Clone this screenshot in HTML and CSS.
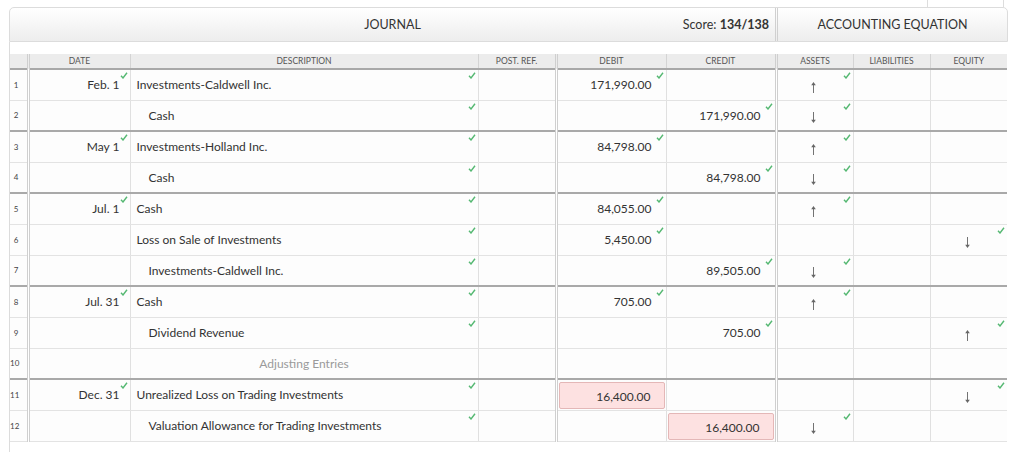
FILE: index.html
```html
<!DOCTYPE html>
<html>
<head>
<meta charset="utf-8">
<link rel="stylesheet" href="styles.css">
</head>
<body>
<div class="topbar"><div class="stub"></div></div>
<div class="panel">
  <div class="tabs">
    <div class="tab-journal">
      <span></span>
      <span class="title">JOURNAL</span>
      <span class="score">Score: <b>134/138</b></span>
    </div>
    <div class="tab-eq">ACCOUNTING EQUATION</div>
  </div>
  <div class="body">
    <table class="journal">
      <colgroup>
        <col class="c-num"><col class="c-date"><col class="c-desc"><col class="c-post"><col class="c-amt"><col class="c-amt"><col class="c-eq"><col class="c-eq"><col class="c-eq">
      </colgroup>
      <thead>
        <tr><th class="num"></th><th class="dbl">DATE</th><th>DESCRIPTION</th><th>POST. REF.</th><th class="dbl">DEBIT</th><th>CREDIT</th><th class="dbl">ASSETS</th><th>LIABILITIES</th><th>EQUITY</th></tr>
      </thead>
      <tbody>
        <tr>
          <td class="num">1</td>
          <td class="date dbl">Feb. 1<svg class="chk" viewBox="0 0 8 7"><path d="M1 3.8L3 6L7 0.8"/></svg></td>
          <td class="desc">Investments-Caldwell Inc.<svg class="chk" viewBox="0 0 8 7"><path d="M1 3.8L3 6L7 0.8"/></svg></td>
          <td></td>
          <td class="amt dbl">171,990.00<svg class="chk" viewBox="0 0 8 7"><path d="M1 3.8L3 6L7 0.8"/></svg></td>
          <td class="amt"></td>
          <td class="eq dbl"><svg class="arr" viewBox="0 0 7 12"><path class="shaft" d="M3.5 2.5V12"/><path class="head" d="M3.5 0L6 3.5H1Z"/></svg><svg class="chk" viewBox="0 0 8 7"><path d="M1 3.8L3 6L7 0.8"/></svg></td>
          <td class="eq"></td>
          <td class="eq"></td>
        </tr>
        <tr class="sep">
          <td class="num">2</td>
          <td class="date dbl"></td>
          <td class="desc ind">Cash<svg class="chk" viewBox="0 0 8 7"><path d="M1 3.8L3 6L7 0.8"/></svg></td>
          <td></td>
          <td class="amt dbl"></td>
          <td class="amt">171,990.00<svg class="chk" viewBox="0 0 8 7"><path d="M1 3.8L3 6L7 0.8"/></svg></td>
          <td class="eq dbl"><svg class="arr down" viewBox="0 0 7 12"><path class="shaft" d="M3.5 0V9.5"/><path class="head" d="M3.5 12L6 8.5H1Z"/></svg><svg class="chk" viewBox="0 0 8 7"><path d="M1 3.8L3 6L7 0.8"/></svg></td>
          <td class="eq"></td>
          <td class="eq"></td>
        </tr>
        <tr>
          <td class="num">3</td>
          <td class="date dbl">May 1<svg class="chk" viewBox="0 0 8 7"><path d="M1 3.8L3 6L7 0.8"/></svg></td>
          <td class="desc">Investments-Holland Inc.<svg class="chk" viewBox="0 0 8 7"><path d="M1 3.8L3 6L7 0.8"/></svg></td>
          <td></td>
          <td class="amt dbl">84,798.00<svg class="chk" viewBox="0 0 8 7"><path d="M1 3.8L3 6L7 0.8"/></svg></td>
          <td class="amt"></td>
          <td class="eq dbl"><svg class="arr" viewBox="0 0 7 12"><path class="shaft" d="M3.5 2.5V12"/><path class="head" d="M3.5 0L6 3.5H1Z"/></svg><svg class="chk" viewBox="0 0 8 7"><path d="M1 3.8L3 6L7 0.8"/></svg></td>
          <td class="eq"></td>
          <td class="eq"></td>
        </tr>
        <tr class="sep">
          <td class="num">4</td>
          <td class="date dbl"></td>
          <td class="desc ind">Cash<svg class="chk" viewBox="0 0 8 7"><path d="M1 3.8L3 6L7 0.8"/></svg></td>
          <td></td>
          <td class="amt dbl"></td>
          <td class="amt">84,798.00<svg class="chk" viewBox="0 0 8 7"><path d="M1 3.8L3 6L7 0.8"/></svg></td>
          <td class="eq dbl"><svg class="arr down" viewBox="0 0 7 12"><path class="shaft" d="M3.5 0V9.5"/><path class="head" d="M3.5 12L6 8.5H1Z"/></svg><svg class="chk" viewBox="0 0 8 7"><path d="M1 3.8L3 6L7 0.8"/></svg></td>
          <td class="eq"></td>
          <td class="eq"></td>
        </tr>
        <tr>
          <td class="num">5</td>
          <td class="date dbl">Jul. 1<svg class="chk" viewBox="0 0 8 7"><path d="M1 3.8L3 6L7 0.8"/></svg></td>
          <td class="desc">Cash<svg class="chk" viewBox="0 0 8 7"><path d="M1 3.8L3 6L7 0.8"/></svg></td>
          <td></td>
          <td class="amt dbl">84,055.00<svg class="chk" viewBox="0 0 8 7"><path d="M1 3.8L3 6L7 0.8"/></svg></td>
          <td class="amt"></td>
          <td class="eq dbl"><svg class="arr" viewBox="0 0 7 12"><path class="shaft" d="M3.5 2.5V12"/><path class="head" d="M3.5 0L6 3.5H1Z"/></svg><svg class="chk" viewBox="0 0 8 7"><path d="M1 3.8L3 6L7 0.8"/></svg></td>
          <td class="eq"></td>
          <td class="eq"></td>
        </tr>
        <tr>
          <td class="num">6</td>
          <td class="date dbl"></td>
          <td class="desc">Loss on Sale of Investments<svg class="chk" viewBox="0 0 8 7"><path d="M1 3.8L3 6L7 0.8"/></svg></td>
          <td></td>
          <td class="amt dbl">5,450.00<svg class="chk" viewBox="0 0 8 7"><path d="M1 3.8L3 6L7 0.8"/></svg></td>
          <td class="amt"></td>
          <td class="eq dbl"></td>
          <td class="eq"></td>
          <td class="eq"><svg class="arr down" viewBox="0 0 7 12"><path class="shaft" d="M3.5 0V9.5"/><path class="head" d="M3.5 12L6 8.5H1Z"/></svg><svg class="chk" viewBox="0 0 8 7"><path d="M1 3.8L3 6L7 0.8"/></svg></td>
        </tr>
        <tr class="sep">
          <td class="num">7</td>
          <td class="date dbl"></td>
          <td class="desc ind">Investments-Caldwell Inc.<svg class="chk" viewBox="0 0 8 7"><path d="M1 3.8L3 6L7 0.8"/></svg></td>
          <td></td>
          <td class="amt dbl"></td>
          <td class="amt">89,505.00<svg class="chk" viewBox="0 0 8 7"><path d="M1 3.8L3 6L7 0.8"/></svg></td>
          <td class="eq dbl"><svg class="arr down" viewBox="0 0 7 12"><path class="shaft" d="M3.5 0V9.5"/><path class="head" d="M3.5 12L6 8.5H1Z"/></svg><svg class="chk" viewBox="0 0 8 7"><path d="M1 3.8L3 6L7 0.8"/></svg></td>
          <td class="eq"></td>
          <td class="eq"></td>
        </tr>
        <tr>
          <td class="num">8</td>
          <td class="date dbl">Jul. 31<svg class="chk" viewBox="0 0 8 7"><path d="M1 3.8L3 6L7 0.8"/></svg></td>
          <td class="desc">Cash<svg class="chk" viewBox="0 0 8 7"><path d="M1 3.8L3 6L7 0.8"/></svg></td>
          <td></td>
          <td class="amt dbl">705.00<svg class="chk" viewBox="0 0 8 7"><path d="M1 3.8L3 6L7 0.8"/></svg></td>
          <td class="amt"></td>
          <td class="eq dbl"><svg class="arr" viewBox="0 0 7 12"><path class="shaft" d="M3.5 2.5V12"/><path class="head" d="M3.5 0L6 3.5H1Z"/></svg><svg class="chk" viewBox="0 0 8 7"><path d="M1 3.8L3 6L7 0.8"/></svg></td>
          <td class="eq"></td>
          <td class="eq"></td>
        </tr>
        <tr>
          <td class="num">9</td>
          <td class="date dbl"></td>
          <td class="desc ind">Dividend Revenue<svg class="chk" viewBox="0 0 8 7"><path d="M1 3.8L3 6L7 0.8"/></svg></td>
          <td></td>
          <td class="amt dbl"></td>
          <td class="amt">705.00<svg class="chk" viewBox="0 0 8 7"><path d="M1 3.8L3 6L7 0.8"/></svg></td>
          <td class="eq dbl"></td>
          <td class="eq"></td>
          <td class="eq"><svg class="arr" viewBox="0 0 7 12"><path class="shaft" d="M3.5 2.5V12"/><path class="head" d="M3.5 0L6 3.5H1Z"/></svg><svg class="chk" viewBox="0 0 8 7"><path d="M1 3.8L3 6L7 0.8"/></svg></td>
        </tr>
        <tr class="sep">
          <td class="num">10</td>
          <td class="date dbl"></td>
          <td class="desc center muted">Adjusting Entries</td>
          <td></td>
          <td class="amt dbl"></td>
          <td class="amt"></td>
          <td class="eq dbl"></td>
          <td class="eq"></td>
          <td class="eq"></td>
        </tr>
        <tr>
          <td class="num">11</td>
          <td class="date dbl">Dec. 31<svg class="chk" viewBox="0 0 8 7"><path d="M1 3.8L3 6L7 0.8"/></svg></td>
          <td class="desc">Unrealized Loss on Trading Investments<svg class="chk" viewBox="0 0 8 7"><path d="M1 3.8L3 6L7 0.8"/></svg></td>
          <td></td>
          <td class="amt dbl wrong"><div class="box">16,400.00</div></td>
          <td class="amt"></td>
          <td class="eq dbl"></td>
          <td class="eq"></td>
          <td class="eq"><svg class="arr down" viewBox="0 0 7 12"><path class="shaft" d="M3.5 0V9.5"/><path class="head" d="M3.5 12L6 8.5H1Z"/></svg><svg class="chk" viewBox="0 0 8 7"><path d="M1 3.8L3 6L7 0.8"/></svg></td>
        </tr>
        <tr>
          <td class="num">12</td>
          <td class="date dbl"></td>
          <td class="desc ind">Valuation Allowance for Trading Investments<svg class="chk" viewBox="0 0 8 7"><path d="M1 3.8L3 6L7 0.8"/></svg></td>
          <td></td>
          <td class="amt dbl"></td>
          <td class="amt wrong"><div class="box">16,400.00</div></td>
          <td class="eq dbl"><svg class="arr down" viewBox="0 0 7 12"><path class="shaft" d="M3.5 0V9.5"/><path class="head" d="M3.5 12L6 8.5H1Z"/></svg><svg class="chk" viewBox="0 0 8 7"><path d="M1 3.8L3 6L7 0.8"/></svg></td>
          <td class="eq"></td>
          <td class="eq"></td>
        </tr>
      </tbody>
    </table>
  </div>
</div>
</body>
</html>
```
FILE: styles.css
```css
* { box-sizing: border-box; }
html, body { margin: 0; padding: 0; background: #fff; }
body {
  font-family: Lato, "Open Sans", "Liberation Sans", sans-serif;
  font-size: 12px;
  color: #333;
  overflow: hidden;
  height: 452px;
}
.topbar {
  display: flex;
  justify-content: flex-end;
  height: 7px;
  padding-right: 20px;
}
.topbar .stub {
  width: 77px;
  border-left: 1px solid #ddd;
  border-right: 1px solid #ddd;
}
.panel {
  margin-left: 9px;
  width: 999px;
}
.tabs {
  display: flex;
  height: 35px;
  border: 1px solid #dcdcdc;
  border-radius: 5px 5px 0 0;
  background: linear-gradient(#ffffff, #ededed);
}
.tab-journal {
  flex: 1;
  display: grid;
  grid-template-columns: 1fr auto 1fr;
  align-items: center;
}
.tab-journal .title { font-size: 12.5px; }
.tab-journal .score {
  justify-self: end;
  padding-right: 6px;
  font-size: 12.5px;
}
.tab-journal .score b { font-weight: 700; }
.tab-eq {
  width: 232px;
  display: flex;
  align-items: center;
  justify-content: center;
  border-left: 3px double #d0d0d0;
  font-size: 12.5px;
}
.body {
  border-left: 1px solid #dcdcdc;
  padding-top: 12px;
  height: 410px;
}
.journal {
  width: 997px;
  table-layout: fixed;
  border-collapse: collapse;
}
.c-num { width: 18px; }
.c-date { width: 102px; }
.c-desc { width: 348px; }
.c-post { width: 78px; }
.c-amt { width: 110px; }
.c-eq { width: 77px; }

.journal th {
  height: 15px;
  padding: 0;
  background: #ececec;
  font-weight: 400;
  font-size: 8.5px;
  color: #555;
  text-align: center;
  border-left: 1px solid #d4d4d4;
  border-bottom: 2px solid #a8a8a8;
  line-height: 13px;
}
.journal th:first-child { border-left: none; }
.journal .dbl { border-left: 3px double #cfcfcf; }
.journal td {
  position: relative;
  height: 31px;
  padding: 0;
  border-left: 1px solid #e0e0e0;
  border-bottom: 1px solid #e3e3e3;
  white-space: nowrap;
  background: #fdfdfd;
}
.journal td:first-child { border-left: none; }
.journal tr.sep td { border-bottom: 2px solid #a9a9a9; }
.journal td.dbl { border-left: 3px double #cfcfcf; }
td.num {
  font-size: 8px;
  text-align: right;
  padding-right: 8px;
  color: #444;
}
td.date {
  text-align: right;
  padding-right: 10px;
}
td.desc { padding-left: 6px; }
td.desc.ind { padding-left: 18px; }
td.center { text-align: center; padding-left: 0; }
td.muted { color: #9a9a9a; }
td.amt {
  text-align: right;
  padding-right: 14px;
}
td.eq { text-align: center; }
.chk {
  position: absolute;
  top: 2px;
  right: 2px;
  width: 8px;
  height: 7px;
}
.chk path {
  fill: none;
  stroke: #55b872;
  stroke-width: 1.4;
}
.arr {
  display: inline-block;
  width: 7px;
  height: 11px;
  margin-top: 4px;
  margin-right: 3px;
  vertical-align: middle;
}
.arr .shaft { stroke: #666; stroke-width: 1; fill: none; }
.arr .head { fill: #666; }
td.wrong { padding: 1px 0 0 1px; }
td.wrong .box {
  height: 27px;
  line-height: 27px;
  margin-right: 1px;
  padding-right: 13px;
  text-align: right;
  background: #fde1e1;
  border: 1px solid #e4b7b7;
  border-radius: 2px;
}
```
